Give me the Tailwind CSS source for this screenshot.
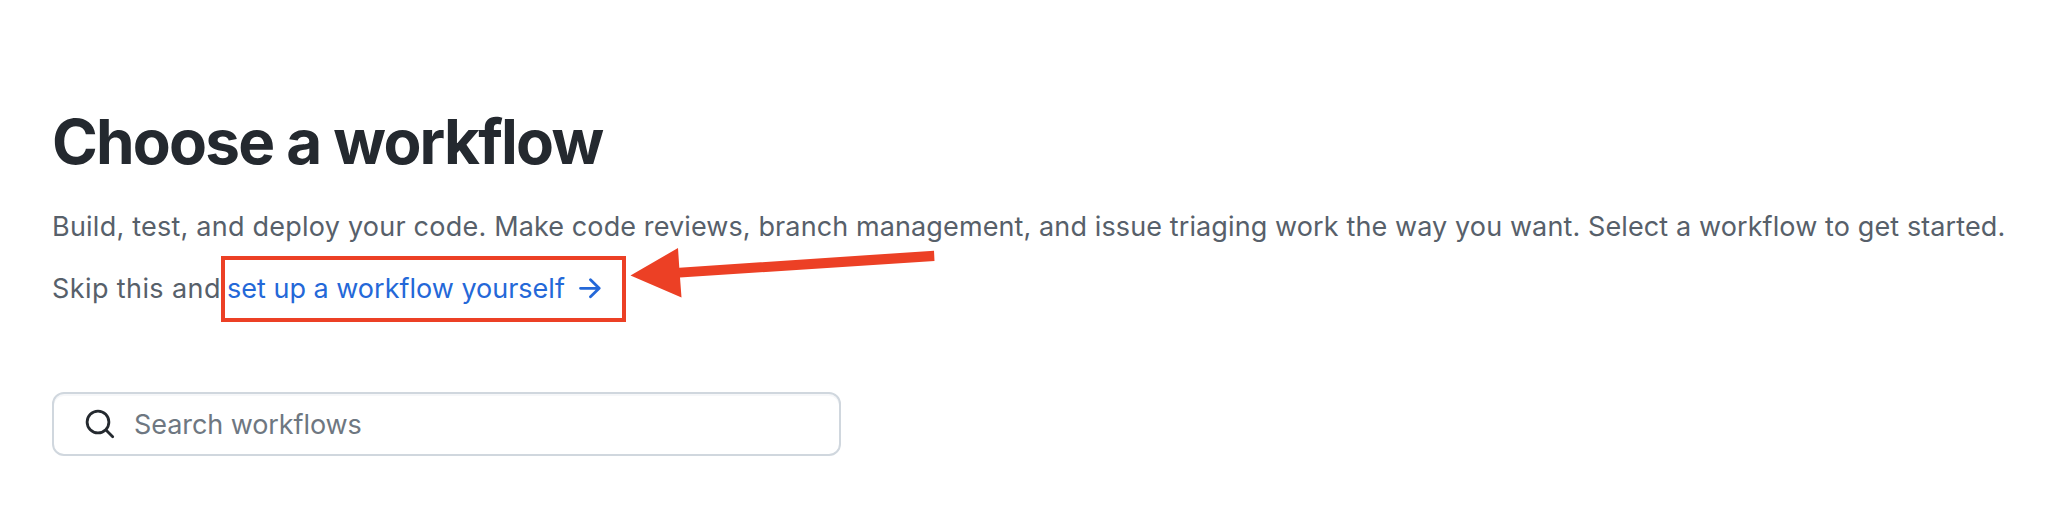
<!DOCTYPE html>
<html lang="en">
<head>
<meta charset="utf-8">
<title>Choose a workflow</title>
<script src="https://cdn.jsdelivr.net/npm/@tailwindcss/browser@4"></script>
</head>
<body class="bg-white font-['Inter',sans-serif] antialiased">
<main class="relative h-[512px] overflow-hidden pl-[52px] pt-[104px] text-[27px] text-[#57606a]">
  <h1 class="h-[76px] whitespace-nowrap text-[62px] leading-[76px] font-bold tracking-[-1.8px] text-[#24292f]">Choose a workflow</h1>
  <p class="mt-[27px] h-10 whitespace-nowrap leading-10 tracking-[0.11px]"><span class="tracking-[0.23px]">Build, test, and deploy your code.</span> Make code reviews, branch management, and issue triaging work the way you want. Select a workflow to get started.</p>
  <div class="mt-[9px] flex h-[66px] items-center whitespace-nowrap leading-10">
    <span class="w-[169px] shrink-0 tracking-[0.4px]">Skip this and</span>
    <a class="flex h-[66px] w-[405px] items-center border-4 border-[#ec4025] pl-[2px] text-[#2468d8]">
      <span class="w-[351px] shrink-0">set up a workflow yourself</span>
      <svg class="h-[22px] w-[24px] shrink-0" viewBox="578 277 24 22" fill="none" stroke="currentColor" stroke-width="2.8" stroke-linecap="round" stroke-linejoin="round"><path d="M580.5 287.3H599M590.5 278.8L599.2 287.3L590.5 295.8"/></svg>
    </a>
  </div>
  <label class="mt-[70px] flex h-16 w-[789px] items-center rounded-xl border-2 border-[#d0d7de] pl-[30px] shadow-[inset_0_2px_0_#f6f7f9]">
    <svg class="h-8 w-8 shrink-0" viewBox="84 408 32 32" fill="none" stroke="#24292f" stroke-width="2.8" stroke-linecap="round"><circle cx="98" cy="422" r="10.9"/><path d="M106 430L112.7 436.7"/></svg>
    <span class="ml-[18px] pt-[2px] leading-10 tracking-[-0.08px] text-[#6e7781]">Search workflows</span>
  </label>
  <svg class="absolute left-[624px] top-[244px] h-[58px] w-[316px]" viewBox="624 244 316 58" fill="#ec4025"><path d="M630.5 275.5L678 248L679.3 267.7L934 250.7L934.5 261L680 277.5L681.5 297.5Z"/></svg>
</main>
</body>
</html>
